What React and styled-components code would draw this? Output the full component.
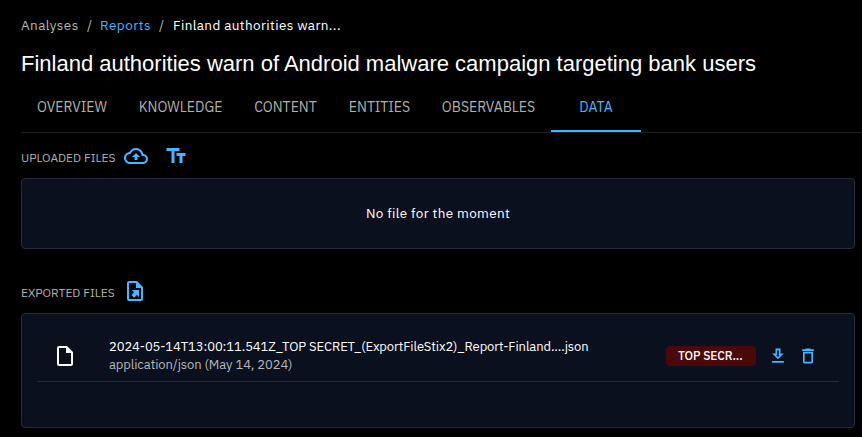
import React from "react";
import styled, { createGlobalStyle } from "styled-components";

const GlobalStyle = createGlobalStyle`
  * { box-sizing: border-box; }
  body {
    margin: 0;
    background: #000;
    color: #fff;
    font-family: "IBM Plex Sans", Roboto, "Liberation Sans", sans-serif;
    font-size: 14px;
    overflow: hidden;
  }
`;

const Page = styled.main`
  display: flex;
  flex-direction: column;
  width: 862px;
  height: 437px;
  padding: 15px 7px 9px 21px;
`;

const Breadcrumbs = styled.nav`
  display: flex;
  height: 20px;
  line-height: 20px;
  white-space: nowrap;
`;

const Crumb = styled.span`
  width: ${(p) => p.$width}px;
  color: ${(p) => p.$color || "#b5b5b5"};
  font-size: 13.5px;
  letter-spacing: ${(p) => p.$spacing || 0}px;
`;

const Title = styled.h1`
  margin: 14px 0 0;
  height: 30px;
  font: 400 22px/30px "Liberation Sans", Arial, sans-serif;
  white-space: nowrap;
`;

const Tabs = styled.div`
  display: flex;
  flex: none;
  width: 841px;
  height: 49px;
  margin-top: 5px;
  border-bottom: 1px solid #1f1f1f;
`;

const Tab = styled.button`
  width: ${(p) => p.$width}px;
  height: 48px;
  padding: 0;
  border: 0;
  border-bottom: 2px solid ${(p) => (p.$active ? "#49b4ff" : "transparent")};
  background: none;
  color: ${(p) => (p.$active ? "#49b4ff" : "#b0b0b0")};
  font: inherit;
`;

const SectionHeader = styled.header`
  display: flex;
  flex: none;
  align-items: center;
  height: 24px;
  margin-top: ${(p) => p.$top}px;
  margin-bottom: 10px;
`;

const SectionTitle = styled.h2`
  margin: 3px 0 0;
  width: ${(p) => p.$width}px;
  font-size: 12px;
  font-weight: 400;
  color: #b0b0b0;
  white-space: nowrap;
`;

const Icon = styled.svg`
  display: block;
  flex: none;
  width: ${(p) => p.$size || 24}px;
  height: ${(p) => p.$size || 24}px;
  margin-right: ${(p) => p.$gap || 0}px;
  fill: ${(p) => p.$color || "#49b4ff"};
`;

const Panel = styled.section`
  flex: none;
  width: 834px;
  height: ${(p) => p.$height}px;
  padding: 0 15px;
  border: 1px solid #272b38;
  border-radius: 4px;
  background: #0a101d;
`;

const Empty = styled.p`
  margin: 0;
  line-height: 69px;
  text-align: center;
  font-size: 13.5px;
  letter-spacing: 0.36px;
`;

const FileRow = styled.div`
  display: flex;
  align-items: center;
  height: 68px;
  padding: 16px 21px 0 16px;
  border-bottom: 1px solid #272b38;
`;

const FileText = styled.div`
  width: 557px;
  margin-left: 32px;
  font-size: 13px;
  line-height: 18px;
  white-space: nowrap;
`;

const FileName = styled.div`
  letter-spacing: -0.1px;
`;

const FileMeta = styled.div`
  color: #b5b7bb;
  letter-spacing: -0.09px;
`;

const Marking = styled.span`
  width: 90px;
  height: 20px;
  margin-right: 12px;
  padding-left: 12px;
  border-radius: 4px;
  background: #4b0808;
  font-size: 12px;
  font-weight: 500;
  line-height: 20px;
  letter-spacing: -0.1px;
`;

const paths = {
  cloud:
    "M19.35 10.04C18.67 6.59 15.64 4 12 4 9.11 4 6.6 5.64 5.35 8.04 2.34 8.36 0 10.91 0 14c0 3.31 2.69 6 6 6h13c2.76 0 5-2.24 5-5 0-2.64-2.05-4.78-4.65-4.96zM19 18H6c-2.21 0-4-1.79-4-4 0-2.05 1.53-3.76 3.56-3.97l1.07-.11.5-.95C8.08 7.14 9.94 6 12 6c2.62 0 4.88 1.86 5.39 4.43l.3 1.5 1.53.11c1.56.1 2.78 1.41 2.78 2.96 0 1.65-1.35 3-3 3zM8 13h2.55v3h2.9v-3H16l-4-4z",
  textFields: "M2.5 4v3h5v12h3V7h5V4h-13zm19 5h-9v3h3v7h3v-7h3V9z",
  fileExport:
    "M14,2H6A2,2 0 0,0 4,4V20A2,2 0 0,0 6,22H18A2,2 0 0,0 20,20V8L14,2M18,20H6V4H13V9H18V20M16,11V18.1L13.9,16L11.1,18.8L8.3,16L11.1,13.2L8.9,11H16Z",
  file: "M14 2H6c-1.1 0-1.99.9-1.99 2L4 20c0 1.1.89 2 1.99 2H18c1.1 0 2-.9 2-2V8l-6-6zM6 20V4h7v5h5v11H6z",
  download:
    "M13 5v6h1.17L12 13.17 9.83 11H11V5h2m2-2H9v6H5l7 7 7-7h-4V3zm4 15H5v2h14v-2z",
  trash:
    "M6 19c0 1.1.9 2 2 2h8c1.1 0 2-.9 2-2V7H6v12zM8 9h8v10H8V9zm7.5-5l-1-1h-5l-1 1H5v2h14V4h-3.5z",
};

const Glyph = ({ name, size, gap, color }) => (
  <Icon viewBox="0 0 24 24" $size={size} $gap={gap} $color={color} aria-hidden="true">
    <path d={paths[name]} />
  </Icon>
);

const tabs = [
  { label: "OVERVIEW", width: 102 },
  { label: "KNOWLEDGE", width: 115 },
  { label: "CONTENT", width: 95 },
  { label: "ENTITIES", width: 93 },
  { label: "OBSERVABLES", width: 125 },
  { label: "DATA", width: 90, active: true },
];

export default function App() {
  return (
    <>
      <GlobalStyle />
      <Page>
        <Breadcrumbs>
          <Crumb $width={66} $spacing={0.42}>Analyses</Crumb>
          <Crumb $width={13}>/</Crumb>
          <Crumb $width={59} $spacing={0.5} $color="#49b4ff">Reports</Crumb>
          <Crumb $width={14}>/</Crumb>
          <Crumb $width={180} $spacing={0.38} $color="#fff">Finland authorities warn...</Crumb>
        </Breadcrumbs>
        <Title>Finland authorities warn of Android malware campaign targeting bank users</Title>
        <Tabs>
          {tabs.map((t) => (
            <Tab key={t.label} $width={t.width} $active={t.active}>
              {t.label}
            </Tab>
          ))}
        </Tabs>
        <SectionHeader $top={11}>
          <SectionTitle $width={103}>UPLOADED FILES</SectionTitle>
          <Glyph name="cloud" gap={16} />
          <Glyph name="textFields" />
        </SectionHeader>
        <Panel $height={71}>
          <Empty>No file for the moment</Empty>
        </Panel>
        <SectionHeader $top={30}>
          <SectionTitle $width={102}>EXPORTED FILES</SectionTitle>
          <Glyph name="fileExport" />
        </SectionHeader>
        <Panel $height={115}>
          <FileRow>
            <Glyph name="file" color="#fff" />
            <FileText>
              <FileName>2024-05-14T13:00:11.541Z_TOP SECRET_(ExportFileStix2)_Report-Finland....json</FileName>
              <FileMeta>application/json (May 14, 2024)</FileMeta>
            </FileText>
            <Marking>TOP SECR...</Marking>
            <Glyph name="download" size={20} gap={10} />
            <Glyph name="trash" size={20} />
          </FileRow>
        </Panel>
      </Page>
    </>
  );
}
